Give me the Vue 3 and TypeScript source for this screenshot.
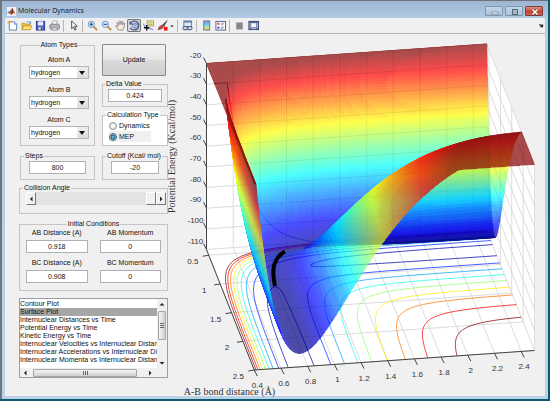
<script setup lang="ts">
import { ref } from 'vue'

type Point = [number, number]
type Patch = { d: string; color: string }

/* ---------- form state ---------- */
const atoms = ref([
  { id: 'a', label: 'Atom A', value: 'hydrogen' },
  { id: 'b', label: 'Atom B', value: 'hydrogen' },
  { id: 'c', label: 'Atom C', value: 'hydrogen' },
])
const delta = ref('0.424')
const method = ref('MEP')
const methods = ['Dynamics', 'MEP']
const steps = ref('800')
const cutoff = ref('-20')
const angle = ref(180)
const conditions = ref([
  { id: 'ab-d', label: 'AB Distance (A)', value: '0.918' },
  { id: 'ab-m', label: 'AB Momentum', value: '0' },
  { id: 'bc-d', label: 'BC Distance (A)', value: '0.908' },
  { id: 'bc-m', label: 'BC Momentum', value: '0' },
])
const plots = [
  'Contour Plot',
  'Surface Plot',
  'Internuclear Distances vs Time',
  'Potential Energy vs Time',
  'Kinetic Energy vs Time',
  'Internuclear Velocities vs Internuclear Distance',
  'Internuclear Accelerations vs Internuclear Distance',
  'Internuclear Momenta vs Internuclear Distance',
]
const selectedPlot = ref('Surface Plot')

/* ---------- LEPS potential for collinear H + H2 ---------- */
const D = 103.7
const BETA = 1.942
const R0 = 0.742
const SATO = 0.18
const RMIN = 0.4
const RMAX = 2.5
const EMIN = -110
const EMAX = -20

function terms(r: number): Point {
  const e = Math.exp(-BETA * (r - R0))
  const k = D / (4 * (1 + SATO))
  return [
    k * ((3 + SATO) * e * e - (2 + 6 * SATO) * e),
    k * ((1 + 3 * SATO) * e * e - (6 + 2 * SATO) * e),
  ]
}
function energy(x: number, y: number): number {
  const [q1, a1] = terms(x)
  const [q2, a2] = terms(y)
  const [q3, a3] = terms(x + y)
  const ex = Math.sqrt(((a1 - a2) ** 2 + (a2 - a3) ** 2 + (a1 - a3) ** 2) / 2)
  return q1 + q2 + q3 - ex
}

/* ---------- projection ---------- */
function project(x: number, y: number, e: number): Point {
  const u = (x - RMIN) / (RMAX - RMIN)
  const v = (y - RMIN) / (RMAX - RMIN)
  const w = (e - EMIN) / (EMAX - EMIN)
  return [206.5 + 280.2 * u + 47.8 * v, 249.5 - 19.5 * u + 120.5 * v - 186 * w]
}
const pt = (p: Point) => `${p[0].toFixed(2)} ${p[1].toFixed(2)}`
const line = (...ps: Point[]) => 'M' + ps.map(pt).join('L')

function jet(t: number): string {
  const ch = (c: number) =>
    Math.round(255 * Math.max(0, Math.min(1, 1.5 - Math.abs(4 * t - c))))
  return `rgb(${ch(3)},${ch(2)},${ch(1)})`
}
const shade = (e: number) => Math.max(0, Math.min(1, (e + D) / (D - 20)))

/* Sample positions, densest on the repulsive wall where the slope is steepest. */
function samples(): number[] {
  const out: number[] = []
  const span = (from: number, to: number, n: number) => {
    for (let i = 0; i < n; i++) out.push(from + ((to - from) * i) / n)
  }
  span(RMIN, 0.6, 90)
  span(0.6, 0.8, 24)
  span(0.8, RMAX, 80)
  out.push(RMAX)
  return out
}

/* Patches run back to front; neighbours of one colour and one facing are joined.
   Four translucent sheets: rear wall, far side of the ridge, near side, left wall. */
function buildSurface() {
  const xs = samples()
  const ys = samples()
  const grid = ys.map(y => xs.map(x => Math.min(EMAX, energy(x, y))))
  const pts = grid.map((row, j) => row.map((e, i) => project(xs[i], ys[j], e)))
  const sheets: Patch[][] = [[], [], [], []]
  for (let j = 0; j < ys.length - 1; j++) {
    const shadeAt = (i: number) =>
      Math.min(63, Math.floor(64 * shade((grid[j][i] + grid[j][i + 1] + grid[j + 1][i] + grid[j + 1][i + 1]) / 4)))
    const sheetAt = (i: number) => {
      const a = pts[j][i]
      const b = pts[j + 1][i + 1]
      const c = pts[j][i + 1]
      const d = pts[j + 1][i]
      const up = (b[0] - a[0]) * (d[1] - c[1]) - (b[1] - a[1]) * (d[0] - c[0]) > 0
      if (up) return ys[j] < R0 ? 0 : 2
      return xs[i] < R0 ? 3 : 1
    }
    let hi = xs.length - 1
    while (hi > 0) {
      const c = shadeAt(hi - 1)
      const sheet = sheetAt(hi - 1)
      let lo = hi - 1
      while (lo > 0 && shadeAt(lo - 1) === c && sheetAt(lo - 1) === sheet) lo--
      const ring = [...pts[j].slice(lo, hi + 1), ...pts[j + 1].slice(lo, hi + 1).reverse()]
      sheets[sheet].push({ d: line(...ring) + 'Z', color: jet((c + 0.5) / 64) })
      hi = lo
    }
  }
  return sheets
}

/* Marching squares over the floor of the box. */
function buildContours() {
  const n = 90
  const at = (i: number) => RMIN + ((RMAX - RMIN) * i) / n
  const grid = Array.from({ length: n + 1 }, (_, j) =>
    Array.from({ length: n + 1 }, (_, i) => energy(at(i), at(j))))
  return [-100, -90, -80, -70, -60, -50, -40, -30, -20.5].map(level => {
    let d = ''
    for (let j = 0; j < n; j++) {
      for (let i = 0; i < n; i++) {
        const corners = [[i, j], [i + 1, j], [i + 1, j + 1], [i, j + 1]]
        const hits: Point[] = []
        for (let k = 0; k < 4; k++) {
          const [ai, aj] = corners[k]
          const [bi, bj] = corners[(k + 1) % 4]
          const a = grid[aj][ai] - level
          const b = grid[bj][bi] - level
          if (a < 0 !== b < 0) {
            const t = a / (a - b)
            hits.push(project(at(ai + (bi - ai) * t), at(aj + (bj - aj) * t), EMIN))
          }
        }
        for (let k = 0; k + 1 < hits.length; k += 2) d += line(hits[k], hits[k + 1])
      }
    }
    return { d, stroke: jet(shade(level)) }
  })
}

const sheets = buildSurface()
const contours = buildContours()

/* ---------- axes ---------- */
const xTicks = Array.from({ length: 11 }, (_, i) => Math.round(4 + 2 * i) / 10)
const yTicks = [0.5, 1, 1.5, 2, 2.5]
const zTicks = Array.from({ length: 10 }, (_, i) => -20 - 10 * i)

const box = line(
  project(RMIN, RMIN, EMAX), project(RMAX, RMIN, EMAX), project(RMAX, RMAX, EMAX),
  project(RMAX, RMAX, EMIN), project(RMIN, RMAX, EMIN), project(RMIN, RMIN, EMIN),
) + 'Z'
const gridLines = [
  ...xTicks.map(x => line(project(x, RMAX, EMIN), project(x, RMIN, EMIN), project(x, RMIN, EMAX))),
  ...yTicks.map(y => line(project(RMIN, y, EMIN), project(RMAX, y, EMIN), project(RMAX, y, EMAX))),
  ...zTicks.map(z => line(project(RMIN, RMIN, z), project(RMAX, RMIN, z), project(RMAX, RMAX, z))),
].join('')
const axisLines = line(
  project(RMIN, RMIN, EMAX), project(RMIN, RMIN, EMIN), project(RMIN, RMAX, EMIN), project(RMAX, RMAX, EMIN),
)
const ticks = [
  ...xTicks.map(x => ({ p: project(x, RMAX, EMIN), dx: 3, dy: 6, lx: 3, ly: 18, text: String(x) })),
  ...yTicks.map(y => ({ p: project(RMIN, y, EMIN), dx: -6, dy: 1, lx: -16, ly: 9, text: String(y) })),
  ...zTicks.map(z => ({ p: project(RMIN, RMIN, z), dx: -3, dy: -6, lx: -11, ly: -6, text: String(z) })),
]
const tickLines = ticks.map(t => line(t.p, [t.p[0] + t.dx, t.p[1] + t.dy])).join('')
</script>

<template>
  <div class="window">
    <header class="titlebar">
      <svg class="logo" viewBox="0 0 10 10" aria-hidden="true">
        <rect width="10" height="10" fill="#eef2f6" />
        <path d="M0 6 3 4.500 6 1 4 8 2 7Z" fill="#3f7fae" />
        <path d="M6 1 9.500 8 7 6.500 4.500 9 3 7Z" fill="#d9531e" />
        <path d="M6 1 7 6 4.500 9Z" fill="#7d2416" />
      </svg>
      <h1>Molecular Dynamics</h1>
      <div class="captions">
        <button type="button" aria-label="Minimize"><svg viewBox="0 0 18 10"><rect x="6" y="5" width="6" height="2" fill="#fff" stroke="#69788b" stroke-width=".7" /></svg></button>
        <button type="button" aria-label="Maximize"><svg viewBox="0 0 18 10"><rect x="6.500" y="2.500" width="5" height="5" fill="#c5d5e6" stroke="#57677a" /><rect x="8" y="4" width="2" height="2" fill="#fff" stroke="#57677a" stroke-width=".6" /></svg></button>
        <button type="button" class="close" aria-label="Close"><svg viewBox="0 0 18 10"><path d="m6.500 2.500 5 5m0-5-5 5" stroke="#6d3b3b" stroke-width="2.600" /><path d="m6.500 2.500 5 5m0-5-5 5" stroke="#fff" stroke-width="1.600" /></svg></button>
      </div>
    </header>

    <div class="toolbar" role="toolbar" aria-label="Figure tools">
      <button type="button" aria-label="New figure"><svg viewBox="0 0 12 12"><path d="M2.500 2h5.500l2.500 2.500v6.500h-8z" fill="#fff" stroke="#557fae" /><path d="M8 2v2.500h2.500" fill="#cfe0f2" stroke="#557fae" stroke-width=".8" /><path d="M2.500.5v4M.5 2.500h4" stroke="#e9a03a" stroke-width="1.300" /></svg></button>
      <button type="button" aria-label="Open"><svg viewBox="0 0 12 12"><path d="M1 10.500v-7h3l1 1h5v6z" fill="#e8bd45" stroke="#b98a20" stroke-width=".7" /><path d="m1 10.500 2-4h9l-2 4z" fill="#ffe27a" stroke="#b98a20" stroke-width=".7" /><path d="M6 2.500q2.500-2 4 .5m.5-1.500v2h-2" fill="none" stroke="#4c7fc0" stroke-width=".8" /></svg></button>
      <button type="button" aria-label="Save"><svg viewBox="0 0 12 12"><rect x="1.500" y="1.500" width="9" height="9.500" fill="#4450c8" stroke="#2c3590" /><rect x="3" y="1.500" width="6" height="4.500" fill="#e4ecfb" /><rect x="3.500" y="7.500" width="5" height="3.500" fill="#b9c4e6" /><rect x="6.500" y="8" width="1.500" height="3" fill="#29317e" /></svg></button>
      <button type="button" aria-label="Print"><svg viewBox="0 0 12 12"><path d="m3.500 5 1-4h4.500l-1 4z" fill="#fff" stroke="#8a8f98" stroke-width=".7" /><path d="M1 5.500 2.500 4.500h8l1 1.500v3l-2 1.500h-7L1 9z" fill="#b6b9bf" stroke="#5c6068" stroke-width=".7" /><path d="M3 8.500h6v2.500h-6z" fill="#e9edf3" stroke="#5c6068" stroke-width=".6" /><path d="M8.500 6.700h1.500" stroke="#d8b32a" /></svg></button>
      <i class="sep"></i>
      <button type="button" aria-label="Edit plot"><svg viewBox="0 0 12 12"><path d="M4 1v8.500l2-2 1.500 3.500 1.300-.600-1.500-3.400h2.700z" fill="#fff" stroke="#333" stroke-width=".9" /></svg></button>
      <i class="sep"></i>
      <button type="button" aria-label="Zoom in"><svg viewBox="0 0 12 12"><path d="m7 7 4 4" stroke="#c18a4b" stroke-width="2" /><circle cx="4.700" cy="4.700" r="3.400" fill="#d8ecfb" stroke="#5f93c4" /><path d="M2.700 4.700h4m-2-2v4" stroke="#25456f" stroke-width="1.100" /></svg></button>
      <button type="button" aria-label="Zoom out"><svg viewBox="0 0 12 12"><path d="m7 7 4 4" stroke="#c18a4b" stroke-width="2" /><circle cx="4.700" cy="4.700" r="3.400" fill="#d8ecfb" stroke="#5f93c4" /><path d="M2.700 4.700h4" stroke="#25456f" stroke-width="1.100" /></svg></button>
      <button type="button" aria-label="Pan"><svg viewBox="0 0 12 12"><path d="M4 11 1 7q-.600-1.500 1.200-.700l1 1L2.300 3q.400-1.300 1.300 0l1 2.300L4.600 1.600q.800-1.300 1.400 0L6.500 5l.700-3.400q1-1 1.400.200L8.500 5.400l.900-2q1.200-.600 1.200.6L9.700 8.500 8.700 11z" fill="#fbe9d6" stroke="#7a7588" stroke-width=".8" /></svg></button>
      <button type="button" class="pressed" aria-label="Rotate 3D" aria-pressed="true"><svg viewBox="0 0 12 12"><path d="M1.500 3.500A5 4.800 0 1 1 1.500 8.500" fill="none" stroke="#4a5f94" stroke-width="1.500" /><path d="M.5 1v4h4z" fill="#4a5f94" /><path d="m4 4.500 2.500-1L9 4.500v3L6.500 9 4 7.500z" fill="#dde6f5" stroke="#53679b" stroke-width=".8" /><path d="m4 4.500 2.500 1L9 4.500m-2.500 1V9" fill="none" stroke="#53679b" stroke-width=".7" /></svg></button>
      <button type="button" aria-label="Data cursor"><svg viewBox="0 0 12 12"><rect x="4.500" y="1" width="7" height="5.500" fill="#f3ec9c" stroke="#8c8a4e" stroke-width=".8" /><path d="M6 3h4M6 4.800h4" stroke="#8c8a4e" stroke-width=".6" /><path d="M.5 4q1 4 3.500 4.500T11 10.500" fill="none" stroke="#5a5ae0" stroke-width=".9" /><path d="M4 5.500v6M1 8.500h6" stroke="#111" stroke-width="1.500" /></svg></button>
      <button type="button" aria-label="Brush"><svg viewBox="0 0 12 12"><path d="m11 .5-5 5 1.500 1.500z" fill="#555" stroke="#444" stroke-width=".7" /><path d="M6 5.500Q2.500 6 1 10.500 5.500 10.500 7.500 7z" fill="#c94242" stroke="#6b3344" stroke-width=".6" /><rect x="7.500" y="7.500" width="4" height="4" fill="#f31212" /></svg></button>
      <button type="button" class="caret" aria-label="Brush colour"><svg viewBox="0 0 12 12"><path d="M1 4.500h10L6 9.500z" fill="#222" /></svg></button>
      <i class="sep"></i>
      <button type="button" aria-label="Link plot"><svg viewBox="0 0 12 12"><rect x="2" y="1" width="8.500" height="6.500" fill="#dce9f7" stroke="#5b7da8" /><path d="M2 2h8.500" stroke="#5b7da8" stroke-width="1.600" /><rect x="1" y="7" width="5.500" height="3.500" rx="1.700" fill="none" stroke="#4d6488" stroke-width="1.100" /><rect x="5.500" y="7" width="5.500" height="3.500" rx="1.700" fill="none" stroke="#4d6488" stroke-width="1.100" /></svg></button>
      <i class="sep"></i>
      <button type="button" aria-label="Colorbar"><svg viewBox="0 0 12 12"><defs><linearGradient id="bar" x2="0" y2="1"><stop stop-color="#7f8fe8" /><stop offset=".4" stop-color="#67cdf0" /><stop offset=".75" stop-color="#cde88f" /><stop offset="1" stop-color="#f3b06c" /></linearGradient></defs><rect x="3" y="1" width="6.500" height="10" fill="url(#bar)" stroke="#6d7482" /></svg></button>
      <button type="button" aria-label="Legend"><svg viewBox="0 0 12 12"><rect x="1" y="1.500" width="10.500" height="9.500" fill="#fff" stroke="#4a5a9b" /><path d="M2.500 3h2.500v2.200h-2.500z" fill="#e24b4b" /><path d="M2.500 7.300h2.500v2.200h-2.500z" fill="#4a63dd" /><path d="M6.500 3.500h3.500M6.500 5h2.500M6.500 7.700h3.500M6.500 9.200h2.500" stroke="#777" stroke-width=".8" /></svg></button>
      <i class="sep"></i>
      <button type="button" aria-label="Hide plot tools"><svg viewBox="0 0 12 12"><rect x="2.500" y="3" width="7" height="7" fill="#868686" stroke="#a5a5a5" stroke-width=".7" /></svg></button>
      <button type="button" aria-label="Show plot tools"><svg viewBox="0 0 12 12"><rect x="1" y="1.500" width="10.500" height="9" fill="#5b6b98" stroke="#33406b" /><rect x="3.500" y="3.500" width="5.500" height="4.500" fill="#f4f7fb" /><path d="M2.200 3v6M10.300 3v6M3.500 9.500h5.500" stroke="#c7d2ea" stroke-width=".9" /></svg></button>
      <button type="button" class="dock" aria-label="Dock figure"><svg viewBox="0 0 12 12"><path d="M2 4q3-1.500 4.500 2L4.500 8H9.500V3L8 4.500Q5 1.500 2 4z" fill="#111" stroke="#111" /></svg></button>
    </div>

    <main class="content">
      <form class="controls" @submit.prevent>
        <div class="pair">
          <fieldset class="atoms">
            <legend class="mid">Atom Types</legend>
            <div v-for="a in atoms" :key="a.id" class="atom">
              <label :for="'atom-' + a.id">{{ a.label }}</label>
              <span class="combo">
                <select :id="'atom-' + a.id" v-model="a.value">
                  <option>hydrogen</option>
                </select>
              </span>
            </div>
          </fieldset>
          <div class="stack">
            <button type="button" class="update">Update</button>
            <fieldset class="single">
              <legend>Delta Value</legend>
              <input v-model="delta" type="text" aria-label="Delta Value" />
            </fieldset>
            <fieldset class="calc">
              <legend>Calculation Type</legend>
              <label v-for="m in methods" :key="m" :class="{ on: m === method }">
                <input v-model="method" type="radio" name="method" :value="m" />{{ m }}
              </label>
            </fieldset>
          </div>
        </div>

        <div class="pair">
          <fieldset class="single">
            <legend>Steps</legend>
            <input v-model="steps" type="text" aria-label="Steps" />
          </fieldset>
          <fieldset class="single">
            <legend>Cutoff (Kcal/ mol)</legend>
            <input v-model="cutoff" type="text" aria-label="Cutoff" />
          </fieldset>
        </div>

        <fieldset class="angle">
          <legend>Collision Angle</legend>
          <div class="slider">
            <button type="button" aria-label="Decrease angle"><svg viewBox="0 0 8 8"><path d="M5.500 1.500v5L3 4z" /></svg></button>
            <input v-model.number="angle" type="range" min="0" max="180" aria-label="Collision Angle" />
            <button type="button" aria-label="Increase angle"><svg viewBox="0 0 8 8"><path d="M3 1.500v5L5.500 4z" /></svg></button>
          </div>
        </fieldset>

        <fieldset class="initial">
          <legend class="mid">Initial Conditions</legend>
          <div v-for="c in conditions" :key="c.id" class="condition">
            <label :for="c.id">{{ c.label }}</label>
            <input :id="c.id" v-model="c.value" type="text" />
          </div>
        </fieldset>

        <div class="listbox">
          <select v-model="selectedPlot" size="8" aria-label="Plot type">
            <option v-for="p in plots" :key="p" :class="{ chosen: p === selectedPlot }">{{ p }}</option>
          </select>
          <div class="bar vertical">
            <svg viewBox="0 0 8 8"><path d="M1.500 5.500h5L4 3z" /></svg>
            <i class="grip"></i>
            <svg viewBox="0 0 8 8"><path d="M1.500 3h5L4 5.500z" /></svg>
          </div>
          <div class="bar horizontal">
            <svg viewBox="0 0 8 8"><path d="M5.500 1.500v5L3 4z" /></svg>
            <i class="grip"></i>
            <svg viewBox="0 0 8 8"><path d="M3 1.500v5L5.500 4z" /></svg>
          </div>
        </div>
      </form>

      <svg class="plot" viewBox="168 34 377 362" role="img" aria-label="Potential energy surface">
        <path :d="box" fill="#fff" />
        <path :d="gridLines" class="grid" />
        <g class="contours">
          <path v-for="(c, i) in contours" :key="i" :d="c.d" :stroke="c.stroke" />
        </g>
        <g v-for="(sheet, k) in sheets" :key="k" class="sheet">
          <path v-for="(s, i) in sheet" :key="i" :d="s.d" :fill="s.color" :stroke="s.color" />
        </g>
        <path :d="gridLines" class="grid over" />
        <path :d="axisLines + tickLines" class="axis" />
        <path d="M285 251.500Q277 256 274.500 264T275 286" class="path" />
        <g class="tick-text">
          <text v-for="(t, i) in ticks" :key="i" :x="t.p[0] + t.lx" :y="t.p[1] + t.ly">{{ t.text }}</text>
        </g>
        <text class="axis-name" x="229.500" y="395">A-B bond distance (Å)</text>
        <text class="axis-name" transform="translate(175 156.500) rotate(-90)">Potential Energy (Kcal/mol)</text>
      </svg>
    </main>
  </div>
</template>

<style>
body {
  margin: 0;
  background: #0a5c6c;
}
</style>

<style scoped>
* {
  box-sizing: border-box;
}
.window {
  display: flex;
  flex-direction: column;
  min-height: calc(100vh - 2px);
  margin: 0 2px 2px 0;
  padding: 0 3px 3px;
  border-top: 1px solid #6f7378;
  border-left: 2px solid #70757d;
  background: linear-gradient(#9cb5d2, #b4cce6 18px, #bbd1ea);
  font: 7px/8px "Liberation Sans", Arial, sans-serif;
  color: #111;
}
.titlebar {
  display: flex;
  align-items: center;
  height: 17px;
  padding: 3px 2px 0;
  gap: 2px;
}
.logo {
  width: 9px;
  height: 9px;
}
h1 {
  flex: 1;
  margin: 0;
  font: 7px/10px "Open Sans", "Noto Sans", sans-serif;
}
.captions {
  display: flex;
  gap: 2px;
}
.captions button {
  width: 18px;
  height: 10px;
  padding: 0;
  border: 1px solid #7f95b0;
  border-radius: 1px;
  background: linear-gradient(#c6d8ea, #a9c1dc);
  display: grid;
  place-items: center;
}
.captions .close {
  border-color: #7a3b3b;
  background: linear-gradient(#dc9183, #c4432c 55%, #d0644c);
}
.captions svg {
  width: 18px;
  height: 10px;
}
.toolbar {
  display: flex;
  align-items: center;
  height: 16px;
  border-bottom: 1px solid #b4b4b4;
  background: #f0f0f0;
}
.toolbar button {
  display: grid;
  place-items: center;
  width: 14px;
  height: 13px;
  padding: 0;
  border: 0;
  border-radius: 2px;
  background: none;
}
.toolbar button svg {
  width: 11px;
  height: 11px;
}
.toolbar .pressed {
  background: #d5d7dc;
  box-shadow: inset 0 0 0 1px #777;
}
.toolbar .caret {
  width: 6px;
}
.toolbar .caret svg {
  width: 4px;
  height: 4px;
}
.toolbar .dock {
  margin-left: auto;
  width: 9px;
}
.toolbar .dock svg {
  width: 6px;
  height: 6px;
}
.sep {
  width: 5px;
  height: 12px;
  background: linear-gradient(#b5b5b5, #b5b5b5) center / 1px 100% no-repeat;
}
.content {
  flex: 1;
  display: flex;
  align-items: flex-start;
  background: #f0f0f0;
}
.controls {
  display: flex;
  flex-direction: column;
  flex: none;
  gap: 6px;
  width: 163px;
  padding: 7px 0 0 15px;
}
.pair {
  display: grid;
  grid-template-columns: 75px 66px;
  column-gap: 7px;
}
.stack {
  display: flex;
  flex-direction: column;
  gap: 4px;
  padding-top: 3px;
}
fieldset {
  min-width: 0;
  margin: 0;
  padding: 0;
  border: 1px solid #c4c4c4;
}
legend {
  margin-left: -3px;
  padding: 0 1px;
  white-space: nowrap;
}
legend.mid {
  margin: 0 auto;
}
input,
select {
  margin: 0;
  font: inherit;
  color: inherit;
}
input[type="text"] {
  display: block;
  width: 100%;
  height: 13px;
  padding: 0;
  border: 1px solid #aeb0b5;
  background: #fff;
  text-align: center;
}
.atoms {
  display: flex;
  flex-direction: column;
  padding: 7px 5px 5px 8px;
}
.atom {
  display: flex;
  flex-direction: column;
  gap: 2px;
  text-align: center;
}
.atom + .atom {
  margin-top: 7px;
}
.combo {
  display: grid;
  align-items: center;
  border: 1px solid #b4b4b4;
  background: #fff;
}
.combo > select,
.combo::after {
  grid-area: 1 / 1;
}
.combo select {
  appearance: none;
  width: 100%;
  height: 11px;
  padding: 0 1px;
  border: 0;
  background: linear-gradient(#eee, #ddd) right / 11px 100% no-repeat;
}
.combo::after {
  content: "";
  justify-self: end;
  margin-right: 3px;
  border: solid transparent;
  border-width: 4px 3px 0;
  border-top-color: #111;
  pointer-events: none;
}
.update {
  height: 32px;
  padding: 0;
  border: 1px solid #8a8a8a;
  border-radius: 1px;
  background: linear-gradient(#f2f2f2, #e8e8e8 48%, #dadada 52%, #cfcfcf);
  font: inherit;
  color: inherit;
  margin-right: 2px;
}
.single {
  padding: 1px 5px 4px;
}
.pair > .single {
  padding: 1px 8px 5px;
}
.pair > .single legend {
  margin-left: -5px;
}
.calc {
  padding: 1px 1px 3px 6px;
  background: #fff;
}
.calc legend {
  background: #fff;
}
.calc label {
  display: flex;
  align-items: center;
  gap: 2px;
  width: 42px;
  height: 11px;
}
.calc label.on {
  background: #f0f0f0;
}
input[type="radio"] {
  appearance: none;
  flex: none;
  width: 8px;
  height: 8px;
  border: 1px solid #8f9298;
  border-radius: 50%;
  background: radial-gradient(#fff, #d9dbde);
}
input[type="radio"]:checked {
  border-color: #466;
  background: radial-gradient(#69c5ee 10%, #16517c 55%, #dde 65%);
}
.angle {
  padding: 0 1px 8px 6px;
  margin-top: -2px;
  margin-left: -1px;
}
.slider {
  display: flex;
  height: 13px;
}
.slider button {
  display: grid;
  place-items: center;
  width: 10px;
  padding: 0;
  border: 1px solid;
  border-color: #fff #777 #777 #fff;
  background: #f0f0f0;
}
.slider svg,
.bar svg {
  flex: none;
  width: 8px;
  height: 8px;
  fill: #222;
}
input[type="range"] {
  appearance: none;
  flex: 1;
  min-width: 0;
  height: 13px;
  background: #e3e3e3;
}
input[type="range"]::-webkit-slider-thumb {
  appearance: none;
  width: 10px;
  height: 13px;
  border: 1px solid;
  border-color: #fff #777 #777 #fff;
  background: #f0f0f0;
}
.initial {
  display: grid;
  grid-template-columns: 1fr 1fr;
  gap: 6px 12px;
  margin-left: -1px;
  padding: 1px 6px 7px;
}
.condition {
  display: flex;
  flex-direction: column;
  gap: 3px;
  text-align: center;
}
.listbox {
  display: grid;
  grid-template: 69px 9px / 1fr 10px;
  margin: 1px 0 0 -1px;
  border: 1px solid #9a9da3;
  background: #f0f0f0;
}
.listbox select {
  appearance: none;
  width: 100%;
  min-width: 0;
  height: 69px;
  padding: 1px 0 0;
  border: 0;
  border-radius: 0;
  outline: 0;
  background: #fff;
  overflow: hidden;
}
.listbox option {
  min-height: 8px;
  padding: 0;
  line-height: 8px;
  color: #111;
}
.listbox option:nth-child(even) {
  padding-bottom: 1px;
}
.listbox option.chosen {
  background: #a6a6a6 linear-gradient(#a6a6a6, #a6a6a6);
  color: #111;
}
.bar {
  display: flex;
  align-items: center;
  background: #f0f0f0;
}
.vertical {
  flex-direction: column;
  justify-content: space-between;
  padding: 1px 0;
}
.horizontal {
  grid-column: 1 / -1;
  gap: 4px;
  padding: 0 1px;
}
.horizontal svg:last-child {
  margin-left: auto;
  margin-right: 12px;
}
.grip {
  border: 1px solid #a3a6aa;
  border-radius: 1px;
}
.vertical .grip {
  width: 8px;
  height: 29px;
  margin: 3px 0 auto;
  background:
    repeating-linear-gradient(#666 0 1px, transparent 1px 2px) center / 4px 5px no-repeat,
    linear-gradient(90deg, #f5f5f5, #cfd0d2);
}
.horizontal .grip {
  width: 104px;
  height: 8px;
  background:
    repeating-linear-gradient(90deg, #666 0 1px, transparent 1px 2px) center / 5px 4px no-repeat,
    linear-gradient(#f5f5f5, #cfd0d2);
}
.plot {
  flex: 1;
  min-width: 0;
  display: block;
  overflow: visible;
}
.grid {
  fill: none;
  stroke: #e4e4e4;
}
.grid.over {
  stroke: #333;
  opacity: 0.04;
}
.contours path {
  fill: none;
  opacity: 0.75;
}
.sheet {
  opacity: 0.7;
  stroke-width: 0.6;
  stroke-linejoin: round;
  shape-rendering: crispEdges;
}
.axis {
  fill: none;
  stroke: #444;
}
.path {
  fill: none;
  stroke: #000;
  stroke-width: 4;
}
.tick-text {
  font: 8px "Liberation Sans", Arial, sans-serif;
  fill: #333;
  text-anchor: middle;
}
.axis-name {
  font: 10px "Liberation Serif", "Times New Roman", serif;
  fill: #333;
  text-anchor: middle;
}
</style>
